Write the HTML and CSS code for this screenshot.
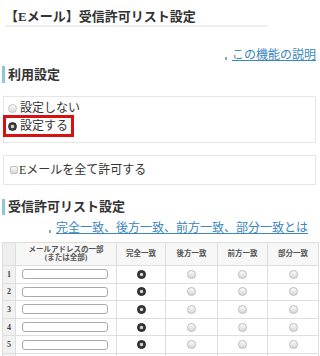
FILE: index.html
```html
<!DOCTYPE html>
<html lang="ja">
<head>
<meta charset="utf-8">
<title>受信許可リスト設定</title>
<link rel="stylesheet" href="styles.css">
</head>
<body>
<div class="page">
  <h1 class="title">【Eメール】受信許可リスト設定</h1>
  <div class="help help-top"><span class="dot"></span><a href="#">この機能の説明</a></div>

  <h2 class="heading heading-first">利用設定</h2>
  <div class="box box-radio">
    <label class="opt"><input type="radio" name="use" class="rd"><span>設定しない</span></label>
    <label class="opt opt-marked"><input type="radio" name="use" class="rd" checked><span>設定する</span></label>
  </div>

  <div class="box box-check">
    <label class="opt"><input type="checkbox" class="cb"><span>Eメールを全て許可する</span></label>
  </div>

  <h2 class="heading heading-second">受信許可リスト設定</h2>
  <div class="help help-list"><span class="dot"></span><a href="#">完全一致、後方一致、前方一致、部分一致とは</a></div>

  <table class="list">
    <colgroup>
      <col class="c-no"><col class="c-addr"><col class="c-m1"><col class="c-m2"><col class="c-m3"><col class="c-m4">
    </colgroup>
    <thead>
      <tr>
        <th class="no"></th>
        <th>メールアドレスの一部<br>(または全部)</th>
        <th>完全一致</th>
        <th>後方一致</th>
        <th>前方一致</th>
        <th>部分一致</th>
      </tr>
    </thead>
    <tbody>
      <tr><td class="no">1</td><td class="addr"><input type="text" class="tx"></td><td><input type="radio" name="m1" class="trd" checked></td><td><input type="radio" name="m1" class="trd"></td><td><input type="radio" name="m1" class="trd"></td><td><input type="radio" name="m1" class="trd"></td></tr>
      <tr><td class="no">2</td><td class="addr"><input type="text" class="tx"></td><td><input type="radio" name="m2" class="trd" checked></td><td><input type="radio" name="m2" class="trd"></td><td><input type="radio" name="m2" class="trd"></td><td><input type="radio" name="m2" class="trd"></td></tr>
      <tr><td class="no">3</td><td class="addr"><input type="text" class="tx"></td><td><input type="radio" name="m3" class="trd" checked></td><td><input type="radio" name="m3" class="trd"></td><td><input type="radio" name="m3" class="trd"></td><td><input type="radio" name="m3" class="trd"></td></tr>
      <tr><td class="no">4</td><td class="addr"><input type="text" class="tx"></td><td><input type="radio" name="m4" class="trd" checked></td><td><input type="radio" name="m4" class="trd"></td><td><input type="radio" name="m4" class="trd"></td><td><input type="radio" name="m4" class="trd"></td></tr>
      <tr><td class="no">5</td><td class="addr"><input type="text" class="tx"></td><td><input type="radio" name="m5" class="trd" checked></td><td><input type="radio" name="m5" class="trd"></td><td><input type="radio" name="m5" class="trd"></td><td><input type="radio" name="m5" class="trd"></td></tr>
      <tr><td class="no">6</td><td class="addr"><input type="text" class="tx"></td><td><input type="radio" name="m6" class="trd" checked></td><td><input type="radio" name="m6" class="trd"></td><td><input type="radio" name="m6" class="trd"></td><td><input type="radio" name="m6" class="trd"></td></tr>
    </tbody>
  </table>
</div>
</body>
</html>
```

FILE: styles.css
```css
html, body {
  margin: 0;
  padding: 0;
  background: #fff;
}
body {
  font-family: "Liberation Serif", "Noto Sans CJK JP", sans-serif;
  color: #333;
  font-size: 12px;
}
.page {
  width: 320px;
  overflow: hidden;
}
.title {
  margin: 0 0 0 5px;
  width: 263px;
  padding-top: 8px;
  font-size: 13px;
  line-height: 17px;
  font-weight: bold;
  border-bottom: 2px solid #eeeeee;
  color: #333;
}
.help {
  font-size: 12px;
  line-height: 14px;
  text-align: right;
  white-space: nowrap;
}
.help a {
  color: #3a86bd;
  text-decoration: underline;
}
.help .dot {
  display: inline-block;
  width: 2px;
  height: 3px;
  background: #8aa9bd;
  margin-right: 5px;
  vertical-align: -1px;
}
.help-top {
  margin-top: 21px;
  padding-right: 4px;
}
.help-list {
  margin-top: 6px;
  padding-right: 12px;
}
.heading {
  margin: 0 0 0 2px;
  border-left: 3px solid #8fc6d6;
  padding-left: 3px;
  font-size: 13px;
  font-weight: bold;
  color: #333;
}
.heading-first {
  margin-top: 4px;
  line-height: 17px;
}
.heading-second {
  margin-top: 14px;
  line-height: 16px;
}
.box {
  margin: 0 4px 0 3px;
  border: 1px solid #e6e6e6;
}
.box-radio {
  margin-top: 13px;
  padding: 4px 0 5px 0;
}
.box-check {
  margin-top: 12px;
  padding: 6px 0 6px 6px;
}
.opt {
  display: flex;
  align-items: center;
  line-height: 14px;
  font-size: 12px;
  color: #333;
}
.box-radio .opt {
  padding-left: 4px;
}
.box-radio .opt-marked {
  display: inline-flex;
  margin: 0 0 0 -1px;
  border: 3px solid #d81010;
  padding: 1px 3px 1px 2px;
}
.box-check .opt {
  line-height: 16px;
}
.rd {
  -webkit-appearance: none;
  appearance: none;
  margin: 0 3px 0 0;
  width: 9px;
  height: 9px;
  border-radius: 50%;
  border: 1px solid #c4c4c4;
  background: linear-gradient(#fafafa, #dcdcdc);
  box-sizing: border-box;
}
.rd:checked {
  border: 1px solid #222;
  background: radial-gradient(circle, #cfcfcf 0 1.5px, #444 2px);
}
.cb {
  -webkit-appearance: none;
  appearance: none;
  margin: 0 1px 0 0;
  width: 8px;
  height: 8px;
  border-radius: 2px;
  border: 1px solid #bdbdbd;
  background: linear-gradient(#fafafa, #dadada);
  box-sizing: border-box;
}
.list {
  margin: 7px 0 0 2px;
  width: 316px;
  border-collapse: collapse;
  table-layout: fixed;
}
.c-no { width: 13px; }
.c-addr { width: 101px; }
.c-m1 { width: 49px; }
.c-m2 { width: 52px; }
.c-m3 { width: 50px; }
.c-m4 { width: 51px; }
.list th,
.list td {
  border: 1px solid #dedede;
  padding: 0;
  text-align: center;
  vertical-align: middle;
}
.list th {
  height: 22px;
  background: #f7f7f7;
  font-size: 7.5px;
  line-height: 8px;
  font-weight: bold;
  color: #555;
}
.list td {
  height: 16.6px;
}
.list .no {
  background: #f1f1f1;
  font-size: 8px;
  font-weight: bold;
  color: #444;
}
.list th.no {
  background: #eeeeee;
}
.tx {
  display: block;
  margin: 0 0 0 6px;
  width: 86px;
  height: 10px;
  box-sizing: border-box;
  border: 1px solid #a9a9a9;
  border-radius: 3px;
  padding: 0;
  background: #fff;
}
.trd {
  -webkit-appearance: none;
  appearance: none;
  display: block;
  margin: 0 auto;
  width: 9px;
  height: 9px;
  border-radius: 50%;
  border: 1px solid #bdbdbd;
  background: linear-gradient(#fbfbfb, #d8d8d8);
  box-sizing: border-box;
}
.trd:checked {
  border: 1px solid #222;
  background: radial-gradient(circle, #d8d8d8 0 1.3px, #3a3a3a 2px);
}
```
